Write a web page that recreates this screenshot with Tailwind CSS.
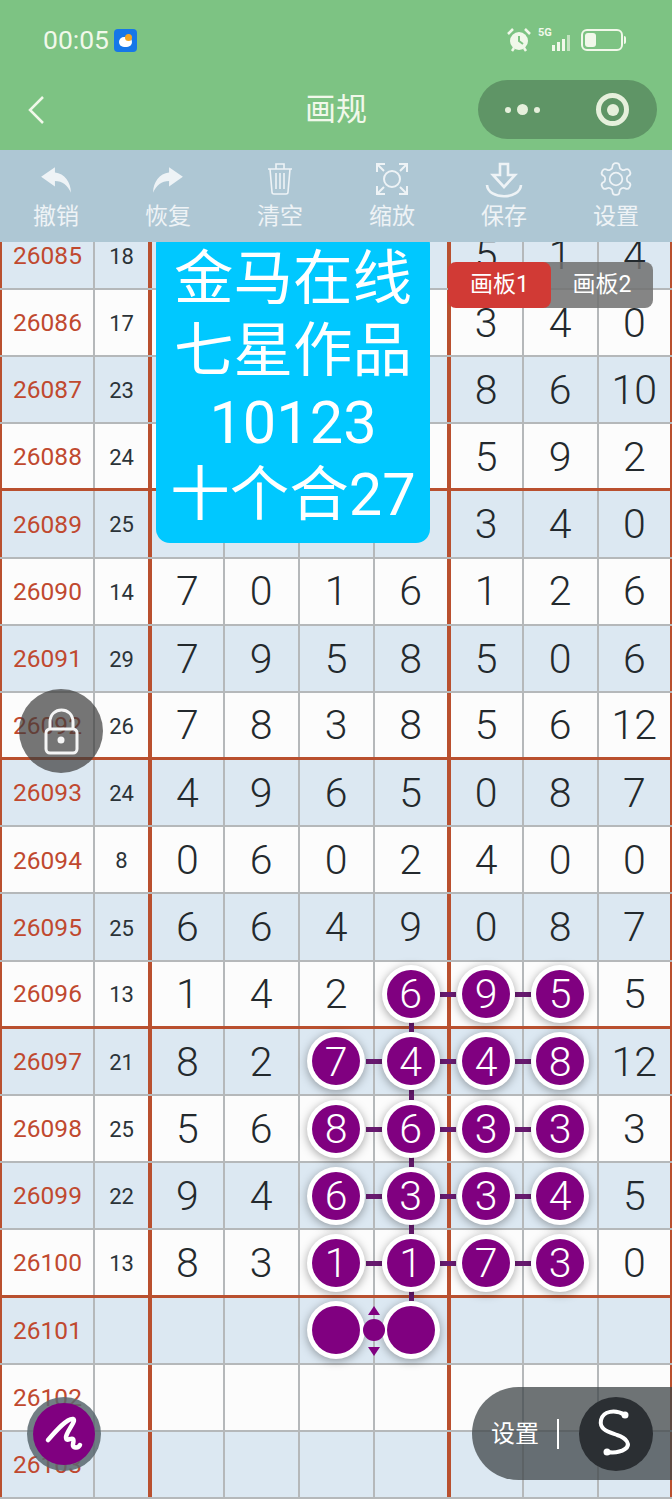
<!DOCTYPE html>
<html lang="en">
<head>
  <meta charset="UTF-8" />
  <meta name="viewport" content="width=device-width, initial-scale=1" />
  <title>画规</title>
  <script src="https://cdn.jsdelivr.net/npm/@tailwindcss/browser@4"></script>
</head>
<body class="relative w-[672px] h-[1500px] overflow-hidden bg-white font-['Roboto','Noto_Sans_CJK_SC',sans-serif]">

  <!-- status bar + title bar -->
  <header class="relative z-20 h-[150px] bg-[#7dc383] text-[#f1f8ea]">
    <div class="flex items-center justify-between h-[80px] pl-[43px] pr-[46px]">
      <div class="flex items-center gap-[5px]">
        <span class="text-[26.5px] leading-none">00:05</span>
        <div class="relative w-[23px] h-[23px] rounded-[4px] bg-[#1677e8]">
          <div class="absolute left-[5px] top-[8px] w-[13px] h-[10px] rounded-full bg-white"></div>
          <div class="absolute left-[11px] top-[5px] w-[7px] h-[7px] rounded-full bg-[#f5a623]"></div>
        </div>
      </div>
      <div class="flex items-center gap-[7px]">
        <svg width="24" height="26" viewBox="0 0 24 26" fill="#f1f8ea">
          <circle cx="12" cy="14" r="9" />
          <path d="M1 7 L6 2 M23 7 L18 2 M5 24 L7 21 M19 24 L17 21" stroke="#f1f8ea" stroke-width="2.5" />
          <path d="M12 9 V14 L16 17" fill="none" stroke="#7dc383" stroke-width="2" />
        </svg>
        <div class="relative w-[36px] h-[26px]">
          <span class="absolute left-0 top-[-1px] text-[11px] leading-[13px] font-bold">5G</span>
          <div class="absolute left-[14px] bottom-[2px] w-[3px] h-[6px] bg-[#f1f8ea]"></div>
          <div class="absolute left-[19px] bottom-[2px] w-[3px] h-[9px] bg-[#f1f8ea]"></div>
          <div class="absolute left-[24px] bottom-[2px] w-[3px] h-[12px] bg-[#f1f8ea]"></div>
          <div class="absolute left-[29px] bottom-[2px] w-[3px] h-[16px] bg-[#f1f8ea]/60"></div>
        </div>
        <div class="flex items-center gap-[1px]">
          <div class="w-[42px] h-[22px] rounded-[6px] border-2 border-[#f1f8ea] p-[2px]">
            <div class="w-[11px] h-full rounded-[3px] bg-[#f1f8ea]"></div>
          </div>
          <div class="w-[2px] h-[8px] rounded-r bg-[#f1f8ea]"></div>
        </div>
      </div>
    </div>
    <div class="relative flex items-start h-[70px]">
      <svg class="absolute left-[26px] top-[15px]" width="20" height="30" viewBox="0 0 20 30" fill="none" stroke="#f1f8ea" stroke-width="2.5">
        <path d="M17 2 L4 15 L17 28" />
      </svg>
      <div class="absolute left-0 right-0 top-[11px] text-center text-[31px] leading-[38px]">画规</div>
      <div class="absolute left-[478px] top-0 flex items-center w-[179px] h-[59px] rounded-full bg-[#5f9566]">
        <div class="flex items-center justify-center gap-[6px] w-[88px]">
          <div class="w-[6px] h-[6px] rounded-full bg-[#e6f0dc]"></div>
          <div class="w-[11px] h-[11px] rounded-full bg-[#e6f0dc]"></div>
          <div class="w-[6px] h-[6px] rounded-full bg-[#e6f0dc]"></div>
        </div>
        <div class="flex items-center justify-center ml-[30px] w-[33px] h-[33px] rounded-full border-[5px] border-[#e6f0dc]">
          <div class="w-[12px] h-[12px] rounded-full bg-[#e6f0dc]"></div>
        </div>
      </div>
    </div>
  </header>

  <!-- toolbar -->
  <nav class="relative z-20 flex h-[92px] bg-[#aec7d4] text-[#eef3f6]">
    <div class="flex-1 flex flex-col items-center">
      <svg class="mt-[14px]" width="34" height="32" viewBox="0 0 32 30" fill="#eef3f6">
        <path d="M15 3 L2 12 L15 21 V16 C22 16 27 20 30 27 C30 17 24 9 15 8 Z" />
      </svg>
      <span class="text-[23px] leading-[30px] mt-[6px]">撤销</span>
    </div>
    <div class="flex-1 flex flex-col items-center">
      <svg class="mt-[14px]" width="34" height="32" viewBox="0 0 32 30" fill="#eef3f6">
        <path d="M17 3 L30 12 L17 21 V16 C10 16 5 20 2 27 C2 17 8 9 17 8 Z" />
      </svg>
      <span class="text-[23px] leading-[30px] mt-[6px]">恢复</span>
    </div>
    <div class="flex-1 flex flex-col items-center">
      <svg class="mt-[12px]" width="30" height="34" viewBox="0 0 30 34" fill="none" stroke="#eef3f6" stroke-width="1.6">
        <path d="M3 7 H27 M11 7 V2 H19 V7 M5 7 L7 30 Q7 32 9 32 H21 Q23 32 23 30 L25 7 M11 11 V27 M15 11 V27 M19 11 V27" />
      </svg>
      <span class="text-[23px] leading-[30px] mt-[6px]">清空</span>
    </div>
    <div class="flex-1 flex flex-col items-center">
      <svg class="mt-[12px]" width="34" height="34" viewBox="0 0 34 34" fill="none" stroke="#eef3f6" stroke-width="2">
        <path d="M2 10 V2 H10 M2 2 L9 9 M24 2 H32 V10 M32 2 L25 9 M2 24 V32 H10 M2 32 L9 25 M32 24 V32 H24 M32 32 L25 25" />
        <circle cx="17" cy="17" r="8" />
      </svg>
      <span class="text-[23px] leading-[30px] mt-[6px]">缩放</span>
    </div>
    <div class="flex-1 flex flex-col items-center">
      <svg class="mt-[12px]" width="40" height="36" viewBox="0 0 40 36" fill="none" stroke="#eef3f6" stroke-width="2.6">
        <path d="M16 2 H24 V13 H31 L20 25 L9 13 H16 Z" />
        <path d="M3 23 C4 38 36 38 37 23" />
      </svg>
      <span class="text-[23px] leading-[30px] mt-[4px]">保存</span>
    </div>
    <div class="flex-1 flex flex-col items-center">
      <svg class="mt-[10px]" width="40" height="38" viewBox="0 0 24 24" fill="none" stroke="#eef3f6" stroke-width="1.1">
        <path d="M12.22 2h-.44a2 2 0 0 0-2 2v.18a2 2 0 0 1-1 1.73l-.43.25a2 2 0 0 1-2 0l-.15-.08a2 2 0 0 0-2.73.73l-.22.38a2 2 0 0 0 .73 2.73l.15.1a2 2 0 0 1 1 1.72v.51a2 2 0 0 1-1 1.74l-.15.09a2 2 0 0 0-.73 2.73l.22.38a2 2 0 0 0 2.73.73l.15-.08a2 2 0 0 1 2 0l.43.25a2 2 0 0 1 1 1.73V20a2 2 0 0 0 2 2h.44a2 2 0 0 0 2-2v-.18a2 2 0 0 1 1-1.73l.43-.25a2 2 0 0 1 2 0l.15.08a2 2 0 0 0 2.73-.73l.22-.39a2 2 0 0 0-.73-2.73l-.15-.08a2 2 0 0 1-1-1.74v-.5a2 2 0 0 1 1-1.74l.15-.09a2 2 0 0 0 .73-2.73l-.22-.38a2 2 0 0 0-2.73-.73l-.15.08a2 2 0 0 1-2 0l-.43-.25a2 2 0 0 1-1-1.73V4a2 2 0 0 0-2-2z" />
        <circle cx="12" cy="12" r="4" />
      </svg>
      <span class="text-[23px] leading-[30px] mt-[4px]">设置</span>
    </div>
  </nav>

  <!-- number table, first row sits partly under the toolbar -->
  <main id="table" class="-mt-[19.4px]"></main>

  <!-- floating things -->
  <div class="absolute z-10 left-[156px] top-[230px] w-[274px] h-[313px] pt-[13px] rounded-[14px] bg-[#00c8ff] text-white text-center text-[59.5px] leading-[72px]">
    <div>金马在线</div>
    <div>七星作品</div>
    <div>10123</div>
    <div>十个合27</div>
  </div>

  <div class="absolute z-10 left-[448px] top-[262px] flex h-[46px] text-white text-[23px]">
    <div class="relative z-[1] flex items-center justify-center w-[103px] rounded-[8px] bg-[#d13a35]">画板1</div>
    <div class="flex items-center justify-center w-[110px] -ml-[8px] pl-[8px] rounded-r-[8px] bg-[#707070]/85">画板2</div>
  </div>

  <div class="absolute z-10 left-[19px] top-[689px] w-[84px] h-[84px] rounded-full bg-[#3c3c3c]/70">
    <svg width="84" height="84" viewBox="0 0 84 84" fill="none" stroke="#f5f5f5" stroke-width="3">
      <rect x="27" y="40" width="31" height="24" rx="4" />
      <path d="M31 40 V33 C31 17 54 17 54 33 V40" />
      <circle cx="42" cy="51" r="3.5" fill="#f5f5f5" stroke="none" />
    </svg>
  </div>

  <div class="absolute z-10 left-[27px] top-[1397px] flex items-center justify-center w-[74px] h-[74px] rounded-full bg-[#59676e]/85">
    <div class="w-[62px] h-[62px] rounded-full bg-[#800080]">
      <svg width="62" height="62" viewBox="0 0 62 62" fill="none" stroke="white" stroke-width="4.5" stroke-linecap="round" stroke-linejoin="round">
        <path d="M15 37 C22 29 34 15 40 16 C44 17 34 28 33 34 C33 40 38 34 40 36 C42 38 38 43 41 44 C44 45 46 44 47 42" />
      </svg>
    </div>
  </div>

  <div class="absolute z-10 left-[472px] top-[1387px] flex items-center w-[200px] h-[93px] rounded-l-full bg-[#3f4548]/75 text-white">
    <span class="ml-[19px] text-[24px] leading-none">设置</span>
    <div class="ml-[18px] w-[2px] h-[30px] bg-white"></div>
    <div class="ml-[20px] w-[74px] h-[74px] rounded-full bg-[#2b2f33]">
      <svg width="74" height="74" viewBox="0 0 74 74" fill="none" stroke="white" stroke-width="4" stroke-linecap="round">
        <path d="M46 18 C36 12 24 14 22 23 C20 33 30 35 38 38 C48 41 52 48 46 52 C40 56 34 56 28 55" />
        <circle cx="46" cy="18" r="3.5" fill="white" stroke="none" />
        <circle cx="28" cy="55" r="3.5" fill="white" stroke="none" />
      </svg>
    </div>
  </div>

  <script>
    const rows = [
      [26085, 18, "", "", "", "", 5, 1, 4],
      [26086, 17, "", "", "", "", 3, 4, 0],
      [26087, 23, "", "", "", "", 8, 6, 10],
      [26088, 24, "", "", "", "", 5, 9, 2],
      [26089, 25, "", "", "", "", 3, 4, 0],
      [26090, 14, 7, 0, 1, 6, 1, 2, 6],
      [26091, 29, 7, 9, 5, 8, 5, 0, 6],
      [26092, 26, 7, 8, 3, 8, 5, 6, 12],
      [26093, 24, 4, 9, 6, 5, 0, 8, 7],
      [26094, 8, 0, 6, 0, 2, 4, 0, 0],
      [26095, 25, 6, 6, 4, 9, 0, 8, 7],
      [26096, 13, 1, 4, 2, 6, 9, 5, 5],
      [26097, 21, 8, 2, 7, 4, 4, 8, 12],
      [26098, 25, 5, 6, 8, 6, 3, 3, 3],
      [26099, 22, 9, 4, 6, 3, 3, 4, 5],
      [26100, 13, 8, 3, 1, 1, 7, 3, 0],
      [26101, "", "", "", "", "", "", "", ""],
      [26102, "", "", "", "", "", "", "", ""],
      [26103, "", "", "", "", "", "", "", ""],
    ];

    // marked cells: row number -> first and last marked column (index into the row)
    const marked = { 26096: [5, 7], 26097: [4, 7], 26098: [4, 7], 26099: [4, 7], 26100: [4, 7], 26101: [4, 5] };
    const colLine = ["border-r-2 border-[#b5b8ba]", "border-r-[4px] border-[#b9502f]", "border-r-2 border-[#b5b8ba]", "border-r-2 border-[#b5b8ba]", "border-r-2 border-[#b5b8ba]", "border-r-[4px] border-[#b9502f]", "border-r-2 border-[#b5b8ba]", "border-r-2 border-[#b5b8ba]", "border-r-2 border-[#b9502f]"];

    function circle(row, col, value) {
      const [from, to] = marked[row];
      const isLast = row === 26101;
      let html = "";
      // link to the next circle on the right
      if (col < to && !isLast) html += `<div class="absolute z-[1] right-[-9px] top-1/2 -mt-[2px] w-[16px] h-[5px] bg-[#6a1b72]"></div>`;
      // link down, only in the fourth number column
      if (col === 5 && !isLast) html += `<div class="absolute z-[1] left-1/2 -ml-[2px] bottom-[-6px] w-[5px] h-[10px] bg-[#6a1b72]"></div>`;
      html += `<div class="absolute z-[2] left-1/2 top-1/2 -ml-[29px] -mt-[29px] flex items-center justify-center w-[58px] h-[58px] rounded-full bg-white shadow-[0_2px_10px_rgba(0,0,0,0.35)]">
        <div class="flex items-center justify-center w-[48px] h-[48px] pt-[2px] rounded-full bg-[#800080] text-white">${value}</div>
      </div>`;
      return html;
    }

    function generateTable() {
      const table = document.getElementById("table");
      let html = "";
      rows.forEach((r, i) => {
        const thick = (r[0] - 26088) % 4 === 0 && r[0] <= 26100;
        const rowClass = r[0] % 2 ? "bg-[#dce8f2]" : "bg-[#fcfcfc]";
        const lineClass = thick ? "border-b-[3px] border-[#b9502f]" : "border-b-2 border-[#b5b8ba]";
        html += `<div class="grid grid-cols-[95px_57px_72.5px_75px_75px_76px_73px_75px_73.5px] h-[67.2px] ${rowClass} ${lineClass}">`;
        r.forEach((v, c) => {
          const isMarked = marked[r[0]] && c >= marked[r[0]][0] && c <= marked[r[0]][1];
          let textClass = "text-[41px] font-[350] text-[#23292d]";
          if (c === 0) textClass = "text-[24.5px] text-[#c0492f] border-l-[2px] border-l-[#b9502f]";
          if (c === 1) textClass = "text-[22px] text-[#2b3338]";
          html += `<div class="relative flex items-center justify-center pt-[2px] ${colLine[c]} ${textClass}">${isMarked ? circle(r[0], c, v) : v}</div>`;
        });
        html += `</div>`;
      });
      table.innerHTML = html;

      // small handle between the two empty circles
      const handleCell = table.children[16].children[4];
      handleCell.innerHTML += `<div class="absolute z-[3] right-[-12px] top-1/2 -mt-[11px] w-[22px] h-[22px] rounded-full bg-[#800080]"></div>
        <div class="absolute z-[3] right-[-7px] top-[8px] w-0 h-0 border-x-[6px] border-x-transparent border-b-[9px] border-b-[#800080]"></div>
        <div class="absolute z-[3] right-[-7px] bottom-[7px] w-0 h-0 border-x-[6px] border-x-transparent border-t-[9px] border-t-[#800080]"></div>`;
    }

    generateTable();
  </script>
</body>
</html>
